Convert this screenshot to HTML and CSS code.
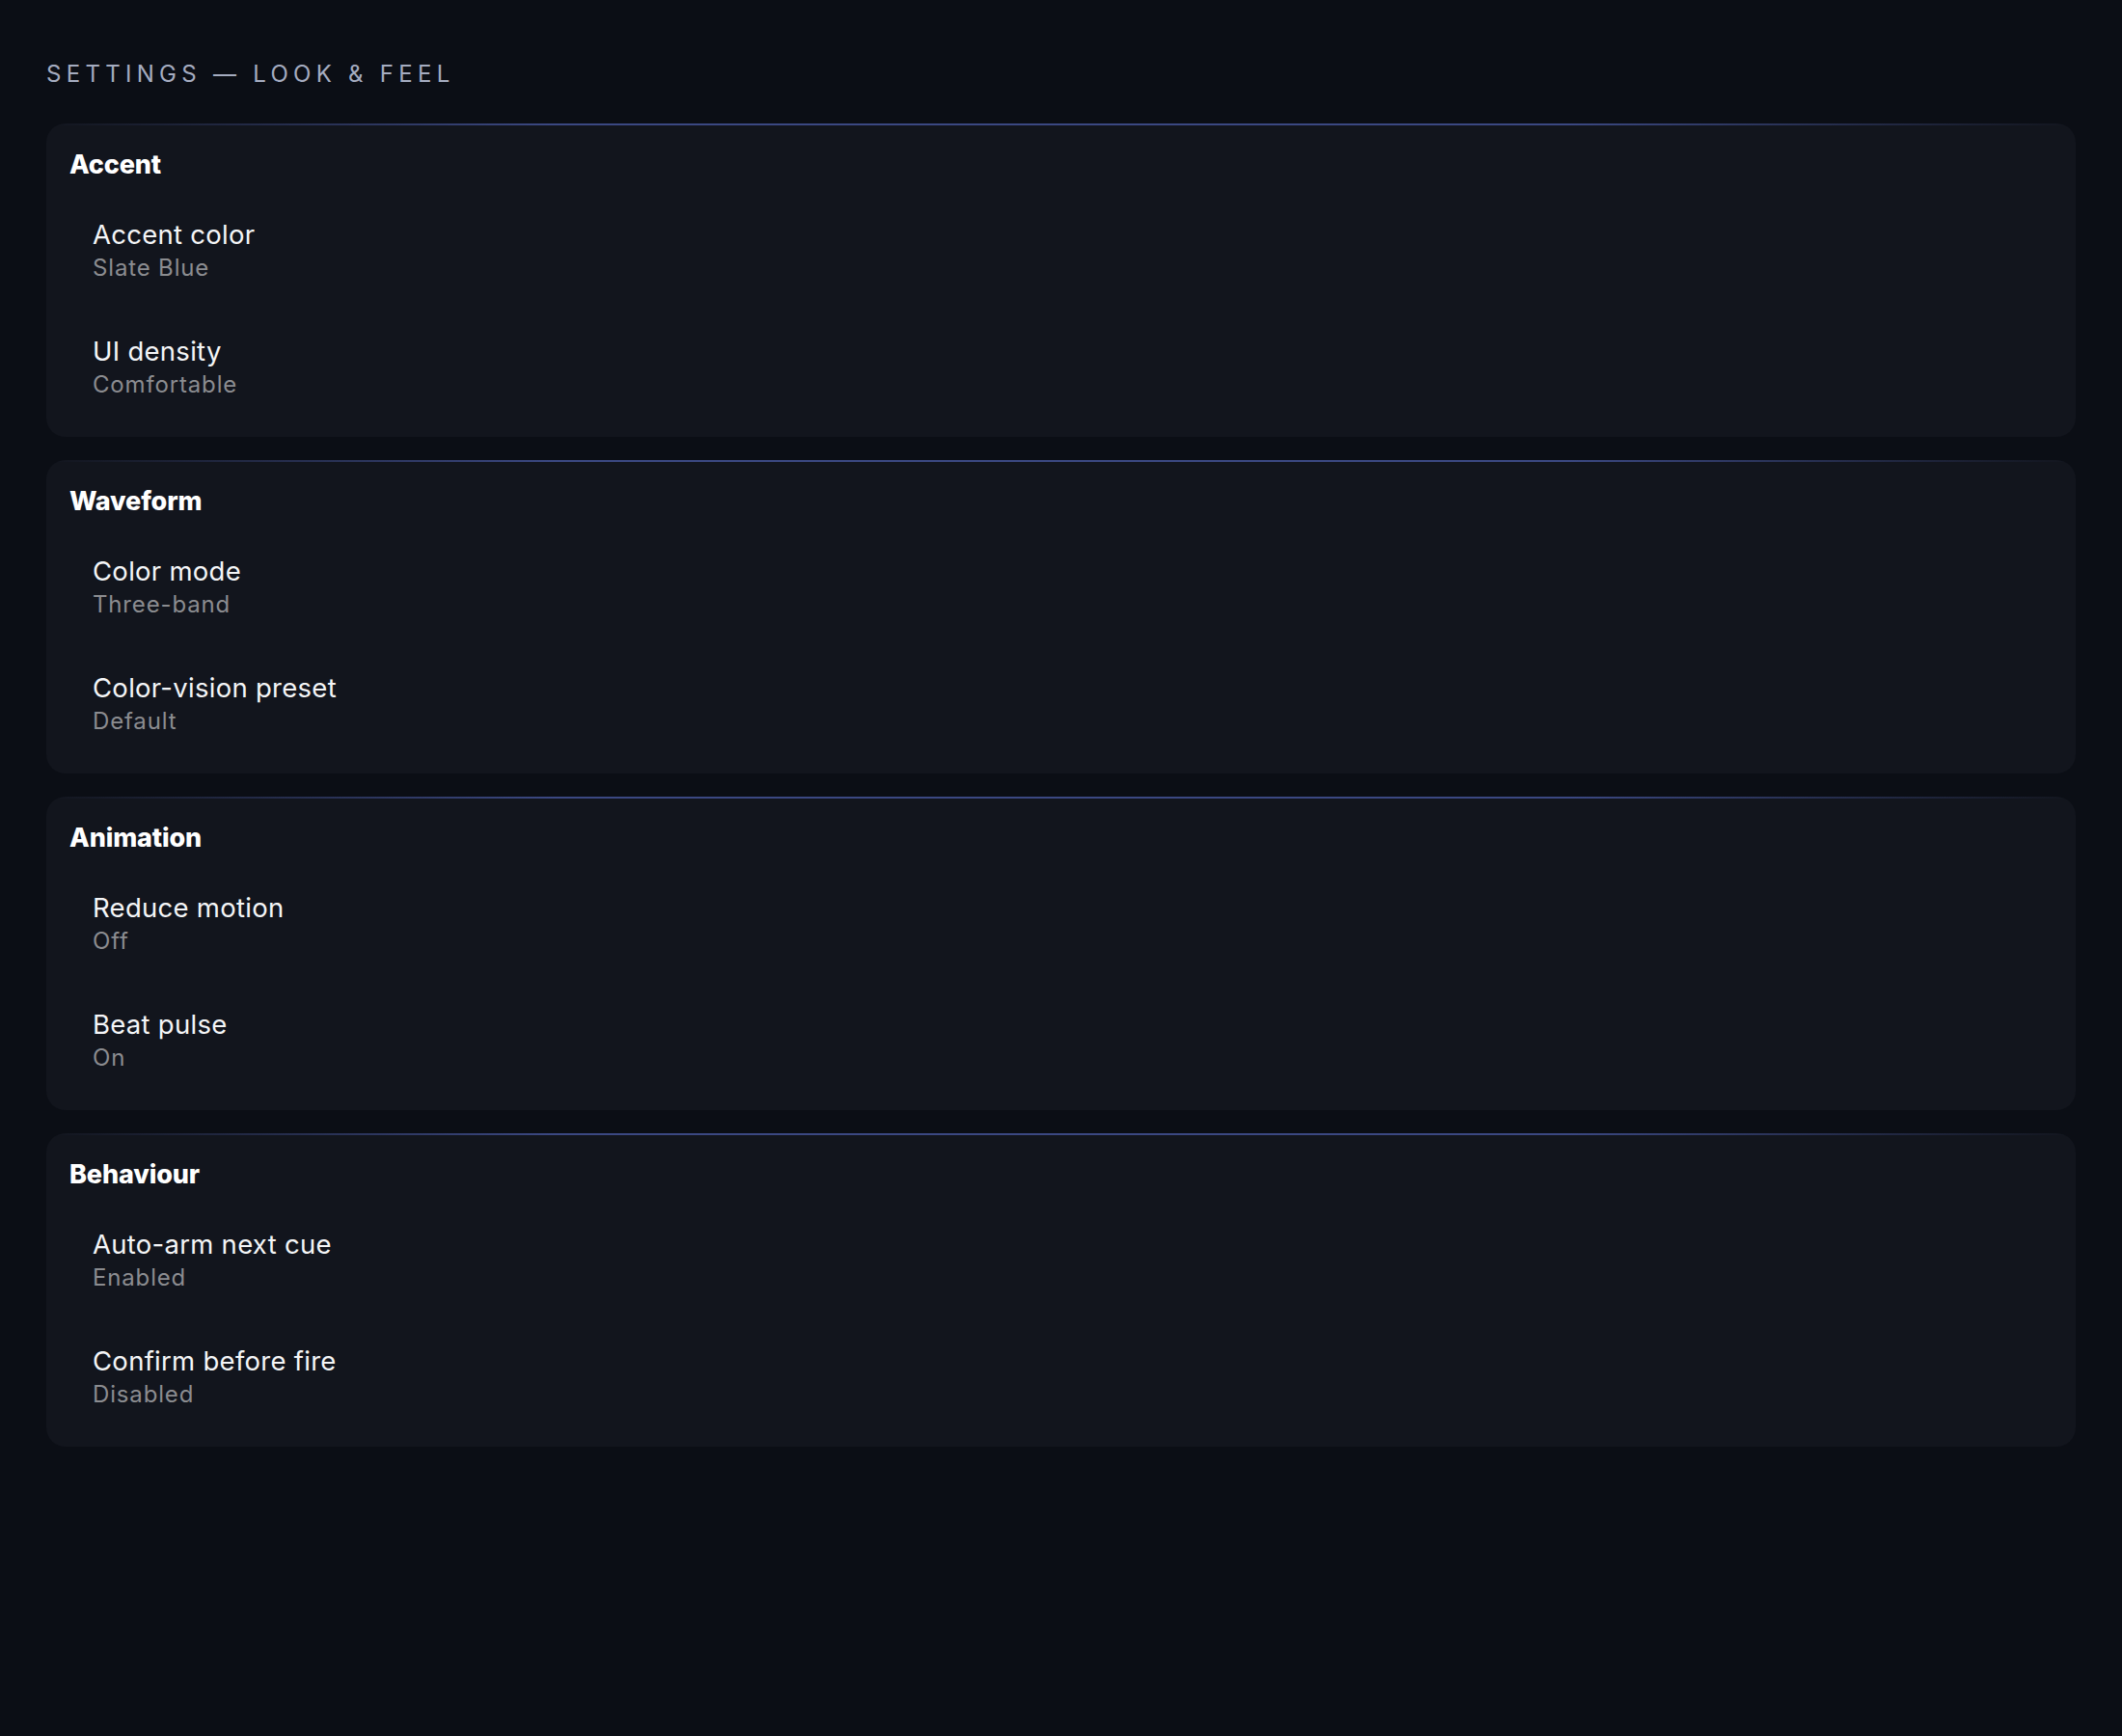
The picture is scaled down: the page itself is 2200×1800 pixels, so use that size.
FILE: index.html
```html
<!DOCTYPE html>
<html lang="en">

<head>
    <meta charset="UTF-8">
    <meta name="viewport" content="width=device-width, initial-scale=1.0">
    <title>Settings — Look &amp; Feel</title>
    <link rel="stylesheet" href="styles.css">
</head>

<body>
    <div class="page">
        <h1 class="page-title">Settings — Look &amp; Feel</h1>

        <section class="card">
            <h2 class="card-title">Accent</h2>
            <div class="row">
                <div class="row-label">Accent color</div>
                <div class="row-value">Slate Blue</div>
            </div>
            <div class="row">
                <div class="row-label">UI density</div>
                <div class="row-value">Comfortable</div>
            </div>
        </section>

        <section class="card">
            <h2 class="card-title">Waveform</h2>
            <div class="row">
                <div class="row-label">Color mode</div>
                <div class="row-value">Three-band</div>
            </div>
            <div class="row">
                <div class="row-label">Color-vision preset</div>
                <div class="row-value">Default</div>
            </div>
        </section>

        <section class="card">
            <h2 class="card-title">Animation</h2>
            <div class="row">
                <div class="row-label">Reduce motion</div>
                <div class="row-value">Off</div>
            </div>
            <div class="row">
                <div class="row-label">Beat pulse</div>
                <div class="row-value">On</div>
            </div>
        </section>

        <section class="card">
            <h2 class="card-title">Behaviour</h2>
            <div class="row">
                <div class="row-label">Auto-arm next cue</div>
                <div class="row-value">Enabled</div>
            </div>
            <div class="row">
                <div class="row-label">Confirm before fire</div>
                <div class="row-value">Disabled</div>
            </div>
        </section>
    </div>
</body>

</html>
```

FILE: styles.css
```css
* {
    box-sizing: border-box;
    margin: 0;
    padding: 0;
}

body {
    font-family: Inter, "Noto Sans", sans-serif;
    background: #0b0e15;
    color: #f2f3f5;
    min-height: 100vh;
}

.page {
    padding: 48px;
    display: flex;
    flex-direction: column;
    gap: 24px;
}

.page-title {
    font-size: 24px;
    font-weight: 400;
    line-height: 1.3;
    text-transform: uppercase;
    letter-spacing: 0.22em;
    color: #a5acc0;
    padding-top: 13px;
    margin-bottom: 12px;
}

.card {
    background: linear-gradient(90deg, rgba(58, 71, 128, 0) 0%, #3b4882 25%, #3b4882 75%, rgba(58, 71, 128, 0) 100%) top / 100% 2px no-repeat, #12151d;
    border-radius: 20px;
    padding: 25px 24px 12px;
}

.card-title {
    font-size: 27px;
    font-weight: 800;
    line-height: 36px;
    letter-spacing: -0.005em;
    color: #fff;
    margin-bottom: 10px;
}

.row {
    padding: 27px 24px;
}

.row-label {
    font-size: 27.5px;
    line-height: 1.3;
    letter-spacing: 0.01em;
    color: #f4f5f7;
}

.row-value {
    font-size: 24px;
    line-height: 1.3;
    letter-spacing: 0.035em;
    color: #8b8c90;
}
```
